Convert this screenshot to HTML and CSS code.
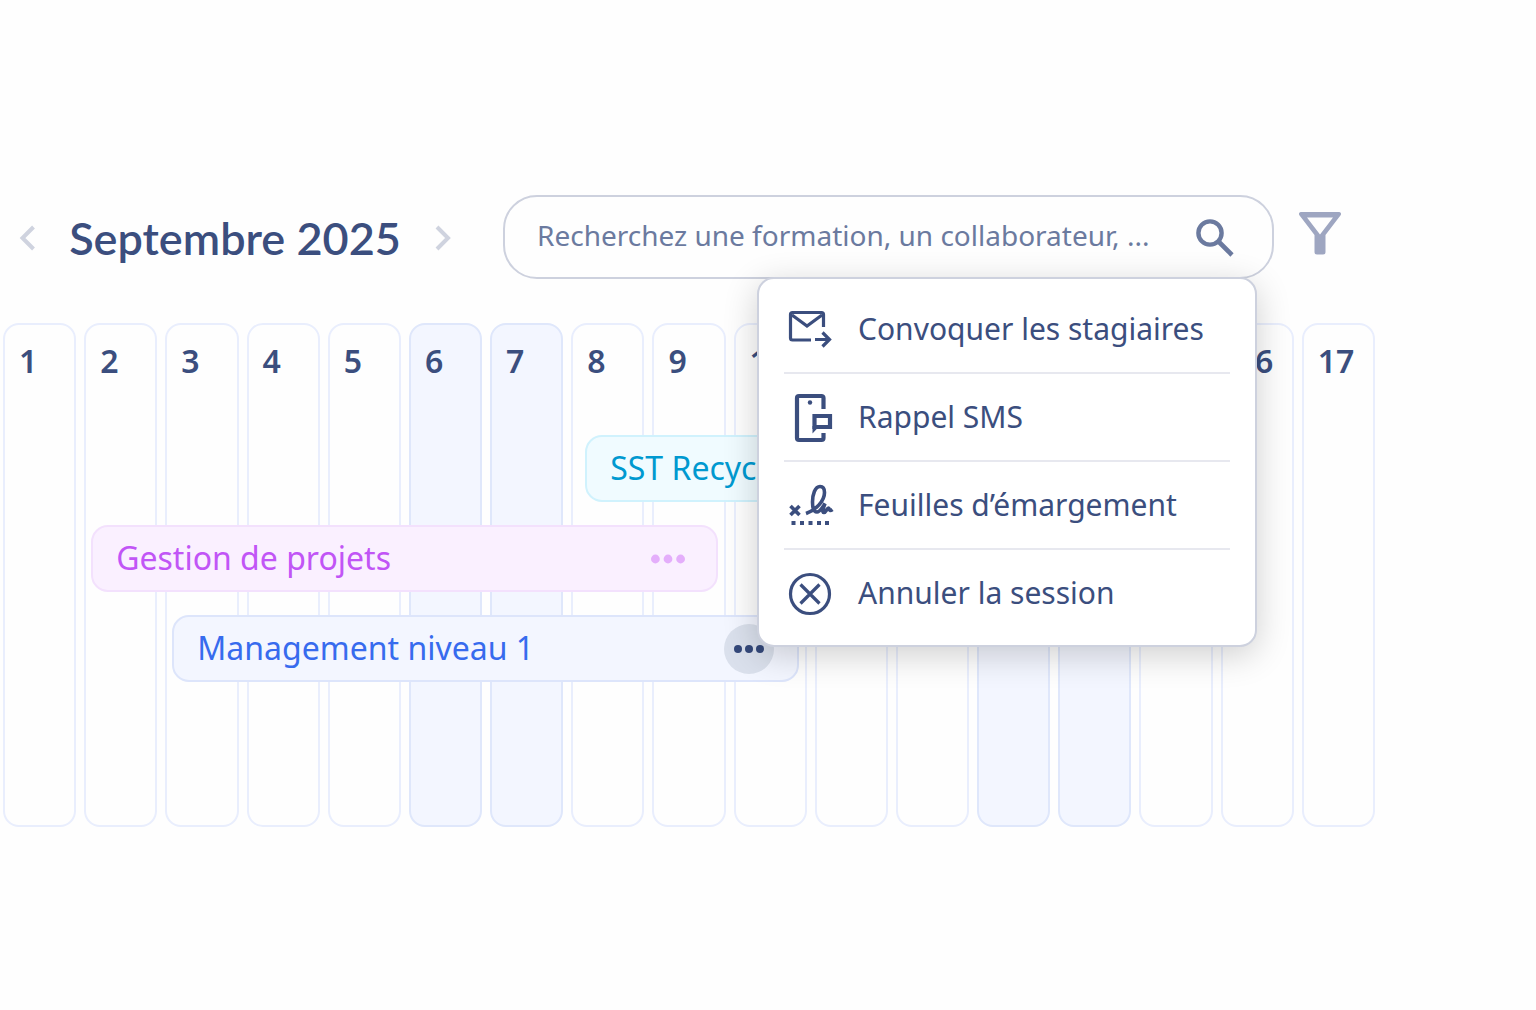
FILE: index.html
```html
<!DOCTYPE html>
<html lang="fr">
<head>
    <meta charset="UTF-8">
    <meta name="viewport" content="width=device-width, initial-scale=1.0">
    <title>Planning des formations</title>
    <link rel="stylesheet" href="styles.css">
</head>
<body>
    <header class="toolbar">
        <div class="month-nav">
            <button class="chevron" type="button" aria-label="Mois précédent">
                <svg width="18" height="26" viewBox="0 0 18 26"><path d="M15.500 2 4.500 13l11 11"/></svg>
            </button>
            <h1>Septembre 2025</h1>
            <button class="chevron" type="button" aria-label="Mois suivant">
                <svg width="18" height="26" viewBox="0 0 18 26"><path d="m3 2 11 11L3 24"/></svg>
            </button>
        </div>

        <div class="search">
            <input type="text" aria-label="Rechercher" placeholder="Recherchez une formation, un collaborateur, ...">
            <button type="button" aria-label="Lancer la recherche">
                <svg width="40" height="40" viewBox="0 0 40 40" fill="none" stroke="#6b7a9f">
                    <circle cx="16" cy="16" r="11.6" stroke-width="4.4"/>
                    <path d="m24 24 14 14" stroke-width="4.6"/>
                </svg>
            </button>

            <ul class="menu">
                <li>
                    <button type="button">
                        <svg width="52" height="52" viewBox="0 0 52 52">
                            <path class="line" d="M27 37H8.500a2 2 0 0 1-2-2V11.500a2 2 0 0 1 2-2h29a2 2 0 0 1 2 2V24M8 12l15 11 15-11M31 36.500h14M38.500 29.500l7 7-7 7"/>
                        </svg>
                        Convoquer les stagiaires
                    </button>
                </li>
                <li>
                    <button type="button">
                        <svg width="52" height="52" viewBox="0 0 52 52">
                            <path class="line thick" d="M39.500 18V7a2 2 0 0 0-2-2h-22.500a2 2 0 0 0-2 2v40a2 2 0 0 0 2 2h22.500a2 2 0 0 0 2-2v-5M30.500 25h15.500v11h-15.500z"/>
                            <path d="M28.500 35h7l-7 7.500z"/>
                            <circle cx="26" cy="11.500" r="2.200"/>
                        </svg>
                        Rappel SMS
                    </button>
                </li>
                <li>
                    <button type="button">
                        <svg width="52" height="52" viewBox="0 0 52 52">
                            <path class="line bold" d="m6.500 27 9 9M15.500 27l-9 9M22 34.500C32 31 40.500 22 40.500 13.500c0-4.500-2-6-4.500-6-5 0-7.500 8-7.500 15.500 0 6 1.500 10 4.500 10s5-4 8-8.500c-2 5-3 9-1 9s3-4.500 4.500-4.500 0 4.500 4 1.500"/>
                            <path d="M7.500 42h4v4h-4zM16 42h4v4h-4zM24.500 42h4v4h-4zM33 42h4v4h-4zM41 42h4v4h-4z"/>
                        </svg>
                        Feuilles d’émargement
                    </button>
                </li>
                <li>
                    <button type="button">
                        <svg width="52" height="52" viewBox="0 0 52 52">
                            <circle class="line" cx="26" cy="27" r="19.500"/>
                            <path class="line" d="m16.500 17.500 19 19M35.500 17.500l-19 19"/>
                        </svg>
                        Annuler la session
                    </button>
                </li>
            </ul>
        </div>

        <button class="filter" type="button" aria-label="Filtrer">
            <svg width="42" height="44" viewBox="0 0 42 44">
                <path d="M2 1h38a2 2 0 0 1 1.600 3.200L26.500 24v17a2.500 2.500 0 0 1-2.500 2.500h-6a2.500 2.500 0 0 1-2.500-2.500V24L.4 4.200A2 2 0 0 1 2 1zM8 6.500l13 17 13-17z" fill="#9ea6c1" fill-rule="evenodd"/>
            </svg>
        </button>
    </header>

    <main class="calendar">
        <div class="day">1</div>
        <div class="day">2</div>
        <div class="day">3</div>
        <div class="day">4</div>
        <div class="day">5</div>
        <div class="day weekend">6</div>
        <div class="day weekend">7</div>
        <div class="day">8</div>
        <div class="day">9</div>
        <div class="day">10</div>
        <div class="day">11</div>
        <div class="day">12</div>
        <div class="day weekend">13</div>
        <div class="day weekend">14</div>
        <div class="day">15</div>
        <div class="day">16</div>
        <div class="day">17</div>

        <div class="events">
            <div class="event sst">SST Recyclage</div>
            <div class="event gestion">
                Gestion de projets
                <button class="more" type="button" aria-label="Actions Gestion de projets">
                    <svg width="34" height="10" viewBox="0 0 34 10"><circle cx="4.400" cy="5" r="4.400"/><circle cx="17" cy="5" r="4.400"/><circle cx="29.600" cy="5" r="4.400"/></svg>
                </button>
            </div>
            <div class="event management">
                Management niveau 1
                <button class="more active" type="button" aria-label="Actions Management niveau 1">
                    <svg width="30" height="10" viewBox="0 0 30 10"><circle cx="4" cy="5" r="4"/><circle cx="15" cy="5" r="4"/><circle cx="26" cy="5" r="4"/></svg>
                </button>
            </div>
        </div>
    </main>
</body>
</html>
```
FILE: styles.css
```css
* {
    box-sizing: border-box;
}
body {
    margin: 0;
    padding-top: 195px;
    background: #fefefe;
    color: #3b4e7e;
    font-family: "Noto Sans", sans-serif;
    font-size: 28px;
}
button {
    padding: 0;
    border: none;
    background: none;
    color: inherit;
    font: inherit;
    cursor: pointer;
}
svg {
    display: block;
    flex: none;
}

/* toolbar */
.toolbar {
    display: flex;
    align-items: center;
    gap: 25px;
    padding: 0 195px 0 18px;
}
.month-nav {
    display: flex;
    align-items: center;
    justify-content: space-between;
    width: 434px;
    margin-right: 26px;
    padding-top: 2px;
}
.month-nav h1 {
    margin: 0;
    font-family: Lato, sans-serif;
    font-size: 45px;
    font-weight: 600;
    line-height: 60px;
    white-space: nowrap;
}
.chevron svg {
    fill: none;
    stroke: #cfd3df;
    stroke-width: 4;
}
.filter {
    padding-bottom: 8px;
}
.search {
    position: relative;
    display: flex;
    flex: 1;
    align-items: center;
    height: 84px;
    padding: 0 38px 0 32px;
    border: 2px solid #cdd1de;
    border-radius: 34px;
    background: #fefefe;
}
.search input {
    flex: 1;
    min-width: 0;
    padding: 0 0 4px;
    border: none;
    outline: none;
    background: none;
    color: #6b7a9f;
    font: inherit;
}
.search input::placeholder {
    color: #6b7a9f;
    opacity: 1;
}

/* actions menu */
.menu {
    position: absolute;
    z-index: 2;
    top: 80px;
    right: 15px;
    width: 500px;
    margin: 0;
    padding: 7px 25px 9px;
    border: 2px solid #cdd1de;
    border-radius: 17px;
    background: #fff;
    box-shadow: 0 8px 34px rgba(0, 0, 0, 0.19);
    list-style: none;
}
.menu li + li {
    border-top: 2px solid #e7e8ef;
}
.menu button {
    display: flex;
    align-items: center;
    gap: 22px;
    width: 100%;
    height: 86px;
    font-size: 30px;
    line-height: 40px;
    text-align: left;
    white-space: nowrap;
}
.menu svg {
    fill: #3b4e7e;
}
.menu .line {
    fill: none;
    stroke: #3b4e7e;
    stroke-width: 3.2;
}
.menu .bold {
    stroke-width: 3.6;
}
.menu .thick {
    stroke-width: 4.2;
}

/* calendar */
.calendar {
    position: relative;
    display: grid;
    grid-template-columns: repeat(17, 1fr);
    gap: 8px;
    margin: 44px 161px 0 3px;
}
.day {
    min-width: 0;
    height: 504px;
    padding: 16px 14px;
    border: 2px solid #e9eefd;
    border-radius: 16px;
    font-size: 32px;
    font-weight: 600;
    line-height: 40px;
}
.weekend {
    border-color: #dfe7fb;
    background: #f3f6ff;
}
.events {
    position: absolute;
    inset: 112px 0 auto;
    display: grid;
    grid-template-columns: repeat(17, 1fr);
    gap: 23px 8px;
}
.event {
    display: flex;
    align-items: flex-start;
    justify-content: space-between;
    height: 67px;
    margin: 0 8px 0 7px;
    padding: 7px 23px;
    border: 2px solid;
    border-radius: 17px;
    font-size: 32px;
    line-height: 48px;
    white-space: nowrap;
}
.sst {
    grid-column: 8 / 16;
    margin-left: 14px;
    border-color: #d0f2fd;
    background: #f0fbff;
    color: #0099d0;
}
.gestion {
    grid-column: 2 / 10;
    border-color: #f3e1fd;
    background: #faf0ff;
    color: #c155f6;
}
.management {
    grid-column: 3 / 11;
    border-color: #dde5fb;
    background: #f3f6ff;
    color: #376bee;
}
.more {
    display: grid;
    place-items: center;
    width: 50px;
    height: 50px;
    border-radius: 50%;
}
.more svg {
    fill: #e4aefb;
}
.more.active {
    background: #dae0ec;
}
.more.active svg {
    fill: #34487a;
}
```
